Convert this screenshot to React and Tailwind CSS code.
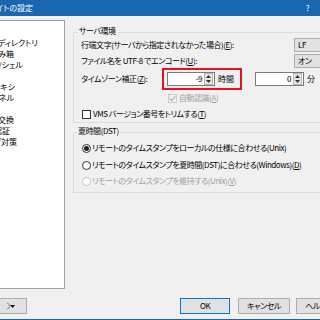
import React from 'react';

const treeItems = [
    { label: "環境", end: 0 },
    { label: "ディレクトリ", end: 38 },
    { label: "ごみ箱", end: 14 },
    { label: "SCP/シェル", end: 23 },
    { label: "接続", end: 0 },
    { label: "プロキシ", end: 15 },
    { label: "トンネル", end: 14 },
    { label: "SSH", end: 0 },
    { label: "鍵交換", end: 14 },
    { label: "認証", end: 10 },
    { label: "バグ対策", end: 17 },
];

const endClass = {
    0: "w-0",
    38: "w-[38px]",
    14: "w-[14px]",
    23: "w-[23px]",
    15: "w-[15px]",
    10: "w-[10px]",
    17: "w-[17px]",
};

const Acc = ({ k }) => (
    <>(<span className="underline underline-offset-1">{k}</span>)</>
);

const Spinner = () => (
    <div className="w-[9px] h-[12px] flex flex-col border border-[#b8b8b8] bg-[#e6e6e6]">
        <div className="flex-1 flex items-center justify-center">
            <svg width="5" height="3" viewBox="0 0 5 3"><path d="M0 3L2.5 0L5 3Z" fill="#333" /></svg>
        </div>
        <div className="flex-1 flex items-center justify-center">
            <svg width="5" height="3" viewBox="0 0 5 3"><path d="M0 0L2.5 3L5 0Z" fill="#333" /></svg>
        </div>
    </div>
);

const NumBox = ({ value, className }) => (
    <div className={`h-[14px] bg-white border border-[#7a7a7a] flex items-center justify-end pr-[1px] ${className}`}>
        <span className="mr-[2px] leading-none">{value}</span>
        <Spinner />
    </div>
);

const Combo = ({ children }) => (
    <div className="w-[40px] h-[14px] shrink-0 bg-[#e1e1e1] border border-[#adadad] flex items-center pl-[3px] leading-none">
        {children}
    </div>
);

const Check = ({ checked, disabled }) => (
    <div className={`w-[9px] h-[9px] shrink-0 border flex items-center justify-center ${disabled ? 'border-[#cccccc] bg-[#f0f0f0]' : 'border-[#333] bg-white'}`}>
        {checked && (
            <svg width="7" height="7" viewBox="0 0 7 7">
                <path d="M0.8 3.6L2.7 5.5L6.2 1.3" fill="none" stroke={disabled ? '#a8a8a8' : '#222'} strokeWidth="1.1" />
            </svg>
        )}
    </div>
);

const Radio = ({ checked, disabled }) => (
    <div className={`w-[9px] h-[9px] shrink-0 rounded-full border flex items-center justify-center bg-white ${disabled ? 'border-[#c4c4c4]' : 'border-[#333]'}`}>
        {checked && <div className="w-[5px] h-[5px] rounded-full bg-[#222]" />}
    </div>
);

const Button = ({ children, className }) => (
    <div className={`h-[16px] shrink-0 bg-[#e1e1e1] border flex items-center justify-center leading-none ${className}`}>
        {children}
    </div>
);

export default function App() {
    return (
        <div className="w-[320px] h-[320px] overflow-hidden bg-[#f0f0f0] flex flex-col text-[8px] tracking-[-0.45px] text-black font-['Noto_Sans_CJK_JP',sans-serif] [font-feature-settings:'palt']">
            <div className="h-[16px] shrink-0 bg-[#1966b1] text-white flex items-center justify-between">
                <div className="w-[33px] flex justify-end whitespace-nowrap overflow-hidden tracking-normal">サイトの設定</div>
                <span className="mr-[11px]">?</span>
            </div>

            <div className="h-[273px] shrink-0 flex">
                <div className="w-[65px] shrink-0 pt-[4px]">
                    <div className="h-[269px] bg-white border-t border-r border-b border-[#a0a0a0] pt-[5px] overflow-hidden tracking-normal">
                        {treeItems.map((item) => (
                            <div key={item.label} className={`h-[11px] leading-[11px] flex justify-end whitespace-nowrap ${endClass[item.end]}`}>
                                {item.label}
                            </div>
                        ))}
                    </div>
                </div>

                <div className="flex-1 pl-[8px] flex flex-col">
                    <div className="mt-[16px] w-[262px] h-[91px] shrink-0 border border-[#dcdcdc] flex flex-col whitespace-nowrap">
                        <div className="-mt-[8px] ml-[4px] px-[1px] w-fit h-[12px] leading-[12px] bg-[#f0f0f0]">サーバ環境</div>
                        <div className="mt-[1px] h-[14px] flex items-center pl-[7px]">
                            <span className="w-[214px]">行端文字(サーバから指定されなかった場合)<Acc k="E" />:</span>
                            <Combo>LF</Combo>
                        </div>
                        <div className="mt-[2px] h-[14px] flex items-center pl-[7px]">
                            <span className="w-[214px]">ファイル名を UTF-8 でエンコード<Acc k="U" />:</span>
                            <Combo>オン</Combo>
                        </div>
                        <div className="h-[22px] flex items-center pl-[7px]">
                            <span className="w-[81px]">タイムゾーン補正<Acc k="Z" />:</span>
                            <div className="w-[80px] h-[22px] border-2 border-[#e81123] flex items-center pl-[3px] gap-[3px]">
                                <NumBox value="-9" className="w-[48px]" />
                                <span className="tracking-normal">時間</span>
                            </div>
                            <NumBox value="0" className="w-[49px] ml-[13px]" />
                            <span className="ml-[3px]">分</span>
                        </div>
                        <div className="mt-[1px] h-[14px] flex items-center pl-[94px] gap-[2px] text-[#a0a0a0]">
                            <Check checked disabled />
                            <span>自動認識<Acc k="A" /></span>
                        </div>
                        <div className="mt-[2px] h-[14px] flex items-center pl-[8px] gap-[2px]">
                            <Check />
                            <span>VMS バージョン番号をトリムする<Acc k="T" /></span>
                        </div>
                    </div>

                    <div className="mt-[9px] w-[262px] h-[61px] shrink-0 border border-[#dcdcdc] flex flex-col whitespace-nowrap">
                        <div className="-mt-[8px] ml-[3px] px-[1px] w-fit h-[12px] leading-[12px] bg-[#f0f0f0]">夏時間(DST)</div>
                        <div className="mt-[4px] h-[14px] flex items-center pl-[8px] gap-[1px]">
                            <Radio checked />
                            <span>リモートのタイムスタンプをローカルの仕様に合わせる(Unix)</span>
                        </div>
                        <div className="mt-[3px] h-[14px] flex items-center pl-[8px] gap-[1px]">
                            <Radio />
                            <span>リモートのタイムスタンプを夏時間(DST)に合わせる(Windows)<Acc k="D" /></span>
                        </div>
                        <div className="mt-[2px] h-[14px] flex items-center pl-[8px] gap-[1px] text-[#a0a0a0]">
                            <Radio disabled />
                            <span>リモートのタイムスタンプを維持する(Unix)<Acc k="V" /></span>
                        </div>
                    </div>
                </div>
            </div>

            <div className="h-[30px] shrink-0 pt-[9px] flex items-start whitespace-nowrap">
                <Button className="w-[27px] border-[#adadad] border-l-0 justify-between pr-[4px]">
                    <svg width="3" height="8" viewBox="4 0 3 8">
                        <circle cx="3.5" cy="4" r="3" fill="#dfe6ee" stroke="#7d8a99" strokeWidth="1" />
                    </svg>
                    <svg width="5" height="3" viewBox="0 0 5 3"><path d="M0 0L2.5 3L5 0Z" fill="#111" /></svg>
                </Button>
                <Button className="ml-[153px] w-[50px] border-[#0078d7]">OK</Button>
                <Button className="ml-[8px] w-[52px] border-[#adadad]">キャンセル</Button>
                <Button className="ml-[6px] w-[50px] border-[#adadad]">ヘルプ<Acc k="H" /></Button>
            </div>
            <div className="h-[1px] shrink-0 bg-[#1966b1]" />
        </div>
    );
}
